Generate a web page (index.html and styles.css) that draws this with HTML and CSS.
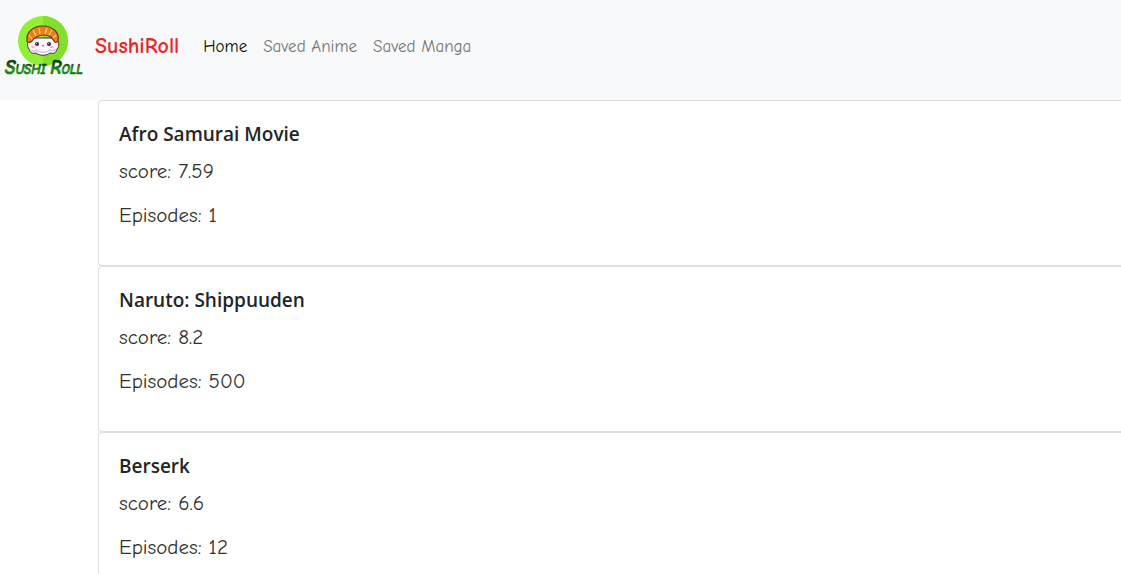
FILE: index.html
```html
<!DOCTYPE html>
<html lang="en">
<head>
<meta charset="utf-8">
<meta name="viewport" content="width=device-width, initial-scale=1">
<title>SushiRoll</title>
<link rel="stylesheet" href="styles.css">
</head>
<body>
<header class="navbar">
  <a class="logo" href="#" aria-label="Sushi Roll logo">
    <svg width="90" height="80" viewBox="0 0 90 80" aria-hidden="true">
      <circle cx="43" cy="31" r="25" fill="#91ef35"/>
      <path d="M43 6a25 25 0 0 1 0 50z" fill="#82df2d"/>
      <path d="M30 28c-3 4-3 8-1 11 1 4 4 5 7 4 4 3 10 3 14 0 4 1 6 0 7-4 3-3 2-7-1-11z" fill="#fff5fb" stroke="#57263f" stroke-width="1"/>
      <path d="M31 40c2 2 4 1 5 0 3 3 11 3 14 0 2 1 4 1 6-1" fill="none" stroke="#d9c5e3" stroke-width="1.5"/>
      <path d="M27 31c-1-9 6-15 16-15s17 7 15 15c-1 2-3 2-4 0-2-4-6-6-10-6-5 0-9 2-12 6c-2 2-4 2-5 0z" fill="#e98116" stroke="#743016" stroke-width="1.2"/>
      <path d="M29 25l3 4M33 20l3 6M39 18l1 6M47 18l-2 6M52 20l-3 5M56 25l-3 3" fill="none" stroke="#ffd28a" stroke-width="1.2"/>
      <circle cx="37" cy="34" r="2" fill="#44243e"/>
      <circle cx="49" cy="34" r="2" fill="#44243e"/>
      <circle cx="36.500" cy="33.400" r=".5" fill="#fff"/>
      <circle cx="48.500" cy="33.400" r=".5" fill="#fff"/>
      <ellipse cx="33" cy="37" rx="1.800" ry="1.200" fill="#ffb3ca"/>
      <ellipse cx="52" cy="37" rx="1.800" ry="1.200" fill="#ffb3ca"/>
      <path d="M41.500 35h3l-1.500 2z" fill="#dd6177"/>
      <defs>
        <linearGradient id="ink" x1="0" y1="0" x2="0" y2="1">
          <stop offset=".3" stop-color="#06420b"/>
          <stop offset=".6" stop-color="#229a16"/>
          <stop offset="1" stop-color="#073d08"/>
        </linearGradient>
      </defs>
      <text class="logo-text" x="5" y="64" fill="url(#ink)" stroke="url(#ink)" stroke-width=".7"><tspan class="logo-cap">S</tspan>USHI <tspan class="logo-cap">R</tspan>OLL</text>
    </svg>
  </a>
  <a class="brand" href="#">SushiRoll</a>
  <nav class="links" aria-label="Main">
    <a class="link active" href="#" aria-current="page">Home</a>
    <a class="link" href="#">Saved Anime</a>
    <a class="link" href="#">Saved Manga</a>
  </nav>
</header>
<main class="list">
  <article class="card">
    <h5 class="title">Afro Samurai Movie</h5>
    <p class="detail">score: 7.59</p>
    <p class="detail">Episodes: 1</p>
  </article>
  <article class="card">
    <h5 class="title">Naruto: Shippuuden</h5>
    <p class="detail">score: 8.2</p>
    <p class="detail">Episodes: 500</p>
  </article>
  <article class="card">
    <h5 class="title">Berserk</h5>
    <p class="detail">score: 6.6</p>
    <p class="detail">Episodes: 12</p>
  </article>
</main>
</body>
</html>
```
FILE: styles.css
```css
* { box-sizing: border-box; }
body {
  margin: 0;
  background: #fff;
  color: #212529;
  font-family: "Comic Sans MS", "Comic Neue", "Noto Sans", sans-serif;
  overflow-x: hidden;
}
.navbar {
  display: flex;
  align-items: center;
  padding: 10px 0;
  background: #f8f9fa;
}
.logo { display: flex; }
.logo-text {
  font: italic bold 13px "Comic Sans MS", "Comic Neue", "Liberation Sans", sans-serif;
}
.logo-cap { font-size: 19px; }
.brand {
  padding: 0 16px 8px 5px;
  color: #ee2526;
  font-size: 22px;
  font-weight: 700;
  line-height: 28px;
  text-decoration: none;
}
.links { display: flex; padding-bottom: 6px; }
.link {
  padding: 0 8px;
  color: #757676;
  font-size: 17px;
  line-height: 24px;
  text-decoration: none;
}
.active { color: #080808; }
.list { margin-left: 98px; }
.card {
  padding: 21px 20px 20px;
  border: 1px solid #dfdfdf;
  border-right: 0;
  border-radius: 4px 0 0 4px;
}
.title {
  margin: 0 0 11px;
  font-family: "Segoe UI", "Open Sans", sans-serif;
  font-size: 19px;
  font-weight: 600;
  line-height: 24px;
}
.detail {
  margin: 0 0 16px;
  color: #303030;
  font-size: 21px;
  line-height: 28px;
}
```
